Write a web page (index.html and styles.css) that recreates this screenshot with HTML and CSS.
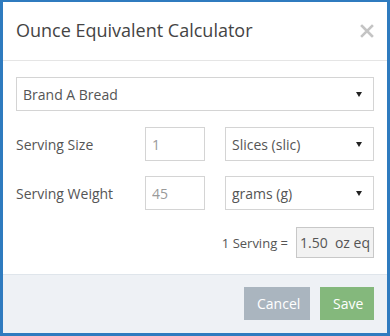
FILE: index.html
```html
<!DOCTYPE html>
<html lang="en">
  <head>
    <meta charset="UTF-8" />
    <title>Ounce Equivalent Calculator</title>
    <link rel="stylesheet" href="styles.css">
  </head>
  <body>
    <!-- Calculator dialog -->
    <div class="modal">
      <div class="modal-header">
        <h4 class="modal-title">Ounce Equivalent Calculator</h4>
        <button class="close" type="button" aria-label="Close">
          <svg width="14" height="14" viewBox="0 0 14 14">
            <path d="M2 2 L12 12 M12 2 L2 12" stroke="#c4c4c4" stroke-width="2.6" stroke-linecap="square" />
          </svg>
        </button>
      </div>

      <div class="modal-body">
        <!-- Food item -->
        <div class="select-wrap">
          <select class="field">
            <option>Brand A Bread</option>
          </select>
        </div>

        <div class="form-row first">
          <label class="row-label">Serving Size</label>
          <input class="field qty" type="text" value="1" readonly>
          <div class="select-wrap unit">
            <select class="field">
              <option>Slices (slic)</option>
            </select>
          </div>
        </div>

        <div class="form-row">
          <label class="row-label">Serving Weight</label>
          <input class="field qty" type="text" value="45" readonly>
          <div class="select-wrap unit">
            <select class="field">
              <option>grams (g)</option>
            </select>
          </div>
        </div>

        <!-- Result -->
        <div class="result">
          <span class="result-label">1 Serving =</span>
          <div class="result-box">1.50&nbsp; oz eq</div>
        </div>
      </div>

      <div class="modal-footer">
        <button class="btn btn-cancel" type="button">Cancel</button>
        <button class="btn btn-save" type="button">Save</button>
      </div>
    </div>
  </body>
</html>
```

FILE: styles.css
```css
/* Page */
body {
  margin: 0;
  font-family: "Open Sans", "Liberation Sans", sans-serif;
  color: #555;
  background: #fff;
}

/* Dialog frame */
.modal {
  width: 390px;
  height: 336px;
  box-sizing: border-box;
  border: 3px solid #2f7bbf;
  border-top-width: 2px;
  display: flex;
  flex-direction: column;
  background: #fff;
}

/* Header */
.modal-header {
  height: 59px;
  box-sizing: border-box;
  padding: 0 12px 0 13px;
  border-bottom: 1px solid #e5e5e5;
  display: flex;
  align-items: center;
  justify-content: space-between;
}

.modal-title {
  margin: 0;
  font-size: 18px;
  font-weight: 400;
  color: #444;
  padding-bottom: 2px;
}

.close {
  border: none;
  background: none;
  padding: 0;
  width: 16px;
  height: 16px;
  display: flex;
  align-items: center;
  justify-content: center;
  cursor: pointer;
}

/* Body */
.modal-body {
  padding: 16px 13px 16px 13px;
  display: flex;
  flex-direction: column;
  gap: 15px;
}

.field {
  box-sizing: border-box;
  height: 34px;
  border: 1px solid #d4d4d4;
  border-radius: 0;
  background: #fff;
  font-family: inherit;
  font-size: 14px;
  color: #555;
  padding: 0 6px;
  margin: 0;
  outline: none;
}

.select-wrap {
  position: relative;
}

.select-wrap select {
  width: 100%;
  appearance: none;
  -webkit-appearance: none;
}

/* small dropdown arrow */
.select-wrap::after {
  content: "";
  position: absolute;
  right: 12px;
  top: 15px;
  border-left: 3px solid transparent;
  border-right: 3px solid transparent;
  border-top: 5px solid #222;
  pointer-events: none;
}

.form-row {
  display: flex;
  align-items: center;
}

.form-row.first {
  margin-top: 1px;
}

.row-label {
  width: 129px;
  font-size: 14px;
  color: #555;
}

.qty {
  width: 60px;
  color: #9a9a9a;
}

.unit {
  margin-left: 20px;
  flex: 1;
}

/* Result line */
.result {
  display: flex;
  align-items: center;
  justify-content: flex-end;
  gap: 8px;
  margin-top: 2px;
  font-size: 14px;
  color: #555;
}

.result-label {
  font-size: 13px;
}

.result-box {
  box-sizing: border-box;
  width: 78px;
  height: 31px;
  border: 1px solid #c8c8c8;
  background: #f2f2f2;
  display: flex;
  align-items: center;
  justify-content: center;
  color: #555;
}

/* Footer */
.modal-footer {
  flex: 1;
  border-top: 1px solid #dfe5eb;
  background: #eef1f5;
  display: flex;
  align-items: flex-start;
  justify-content: flex-end;
  gap: 10px;
  padding: 12px 13px 0 0;
}

.btn {
  height: 33px;
  border: none;
  border-radius: 0;
  font-family: inherit;
  font-size: 14px;
  color: #fff;
  padding: 0 13px;
  cursor: pointer;
}

.btn-cancel {
  background: #aab5bf;
  width: 66px;
}

.btn-save {
  background: #84b87c;
  width: 54px;
}
```
